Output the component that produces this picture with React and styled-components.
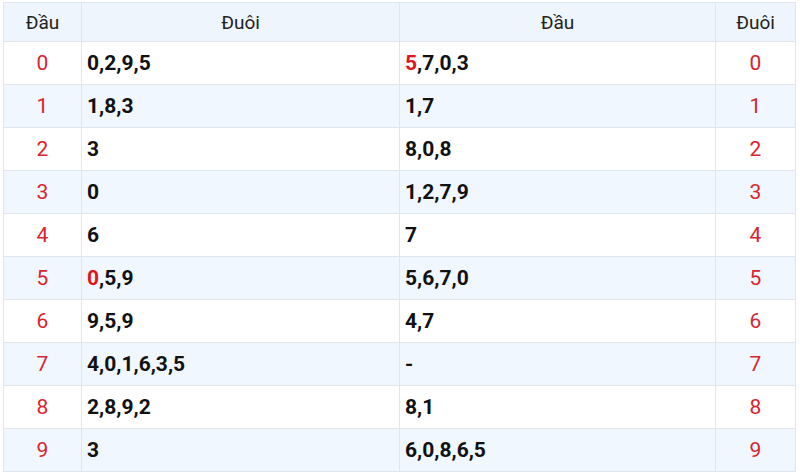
import styled, { createGlobalStyle } from "styled-components";

const GlobalStyle = createGlobalStyle`
  html, body {
    margin: 0;
    padding: 0;
    background: #ffffff;
    font-family: Roboto, "Liberation Sans", Arial, sans-serif;
  }
`;

const Wrapper = styled.div`
  padding: 2px 5px 0 3px;
`;

const Table = styled.table`
  width: 792px;
  border-collapse: collapse;
  table-layout: fixed;
  border: 1px solid #e2e6ea;
`;

const HeadCell = styled.th`
  height: 38px;
  padding: 0;
  background: #eef5fc;
  border: 1px solid #e2e6ea;
  font-weight: 400;
  font-size: 19px;
  color: #222;
  text-align: center;
`;

const Row = styled.tr`
  background: ${(p) => (p.$alt ? "#f0f7fe" : "#ffffff")};
`;

const NumCell = styled.td`
  height: 42px;
  padding: 0;
  border: 1px solid #e2e6ea;
  text-align: center;
  color: #d9232d;
  font-size: 21px;
`;

const ValueCell = styled.td`
  height: 42px;
  padding: 0 0 0 5px;
  border: 1px solid #e2e6ea;
  text-align: left;
  color: #111;
  font-weight: 700;
  font-size: 21px;
`;

const Hot = styled.span`
  color: #e0141f;
`;

const rows = [
  { tail: "0,2,9,5", head: "5,7,0,3", headHot: true },
  { tail: "1,8,3", head: "1,7" },
  { tail: "3", head: "8,0,8" },
  { tail: "0", head: "1,2,7,9" },
  { tail: "6", head: "7" },
  { tail: "0,5,9", head: "5,6,7,0", tailHot: true },
  { tail: "9,5,9", head: "4,7" },
  { tail: "4,0,1,6,3,5", head: "-" },
  { tail: "2,8,9,2", head: "8,1" },
  { tail: "3", head: "6,0,8,6,5" },
];

const Values = ({ text, hot }) => {
  if (!hot) return text;
  const [first, ...rest] = text.split(",");
  return (
    <>
      <Hot>{first}</Hot>,{rest.join(",")}
    </>
  );
};

const App = () => {
  return (
    <Wrapper>
      <GlobalStyle />
      <Table>
        <colgroup>
          <col style={{ width: 78 }} />
          <col style={{ width: 318 }} />
          <col style={{ width: 316 }} />
          <col style={{ width: 80 }} />
        </colgroup>
        <thead>
          <tr>
            <HeadCell>Đầu</HeadCell>
            <HeadCell>Đuôi</HeadCell>
            <HeadCell>Đầu</HeadCell>
            <HeadCell>Đuôi</HeadCell>
          </tr>
        </thead>
        <tbody>
          {rows.map((r, i) => (
            <Row key={i} $alt={i % 2 === 1}>
              <NumCell>{i}</NumCell>
              <ValueCell>
                <Values text={r.tail} hot={r.tailHot} />
              </ValueCell>
              <ValueCell>
                <Values text={r.head} hot={r.headHot} />
              </ValueCell>
              <NumCell>{i}</NumCell>
            </Row>
          ))}
        </tbody>
      </Table>
    </Wrapper>
  );
};

export default App;
